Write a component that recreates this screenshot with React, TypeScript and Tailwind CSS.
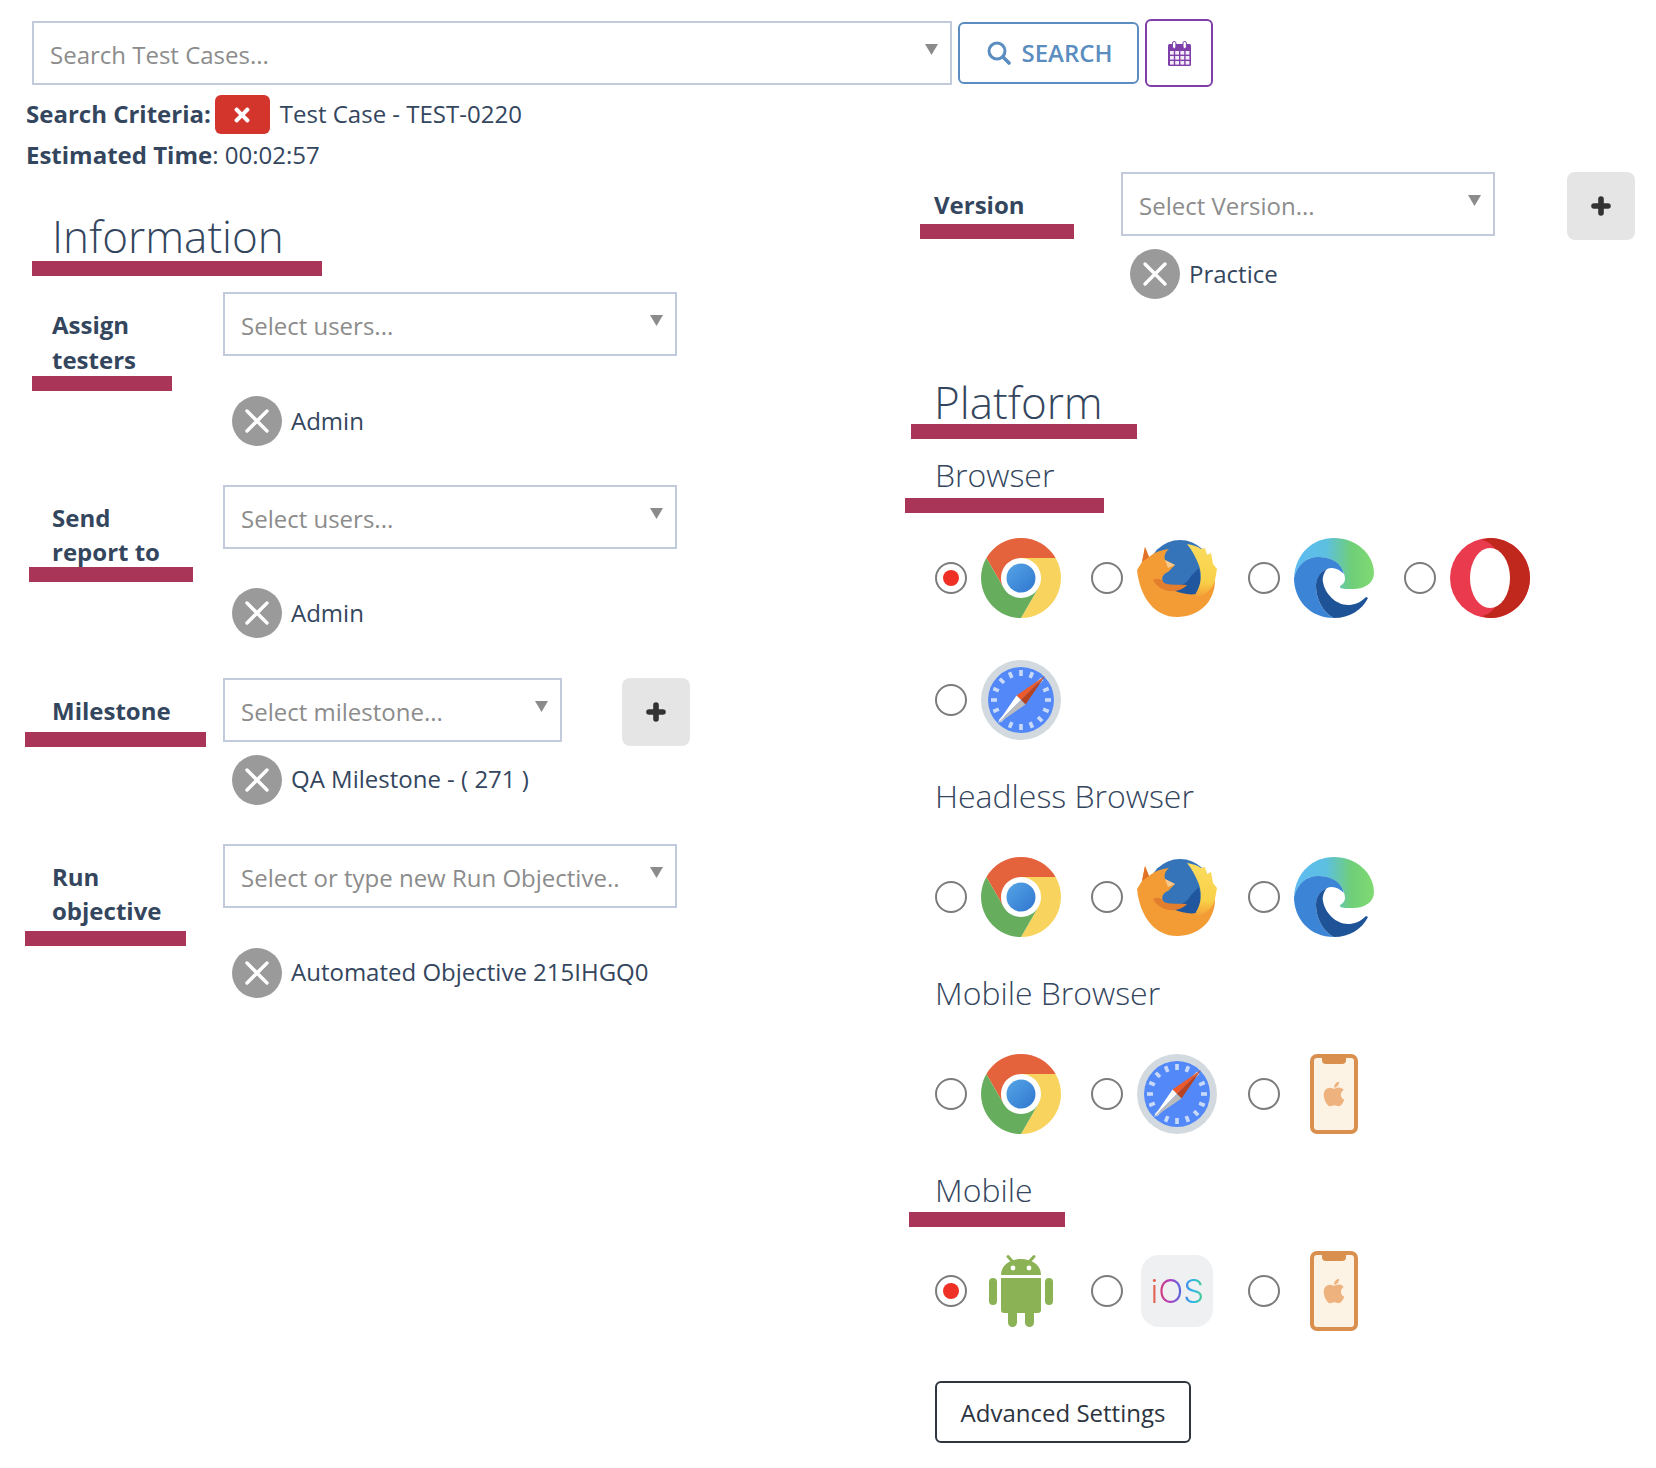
import { FaApple, FaTimes } from "react-icons/fa";

const Arrow = () => (
  <svg className="absolute top-[21px] right-[12px]" width="13" height="11" viewBox="0 0 13 11">
    <polygon points="0,0 13,0 6.5,11" fill="#8b8b8b" />
  </svg>
);

const Select = ({ text, cls }: { text: string; cls: string }) => (
  <div className={`relative h-[64px] shrink-0 border-2 border-[#c2cbdb] bg-white pl-[16px] pt-[4px] flex items-center text-[24px] text-[#8c8c8c] ${cls}`}>
    <span className="whitespace-nowrap">{text}</span>
    <Arrow />
  </div>
);

const Chip = ({ text, cls, lift = "pb-[1px]" }: { text: string; cls: string; lift?: string }) => (
  <div className={`flex items-center h-[50px] ${cls}`}>
    <div className="w-[50px] h-[50px] rounded-full bg-[#9a9a9a] flex items-center justify-center shrink-0">
      <svg width="26" height="26" viewBox="0 0 26 26">
        <path d="M3 3 L23 23 M23 3 L3 23" stroke="#fff" strokeWidth="3.4" strokeLinecap="round" />
      </svg>
    </div>
    <span className={`ml-[9px] text-[24px] whitespace-nowrap ${lift}`}>{text}</span>
  </div>
);

const PlusBtn = ({ cls }: { cls: string }) => (
  <div className={`w-[68px] h-[68px] shrink-0 rounded-[8px] bg-[#e5e5e5] flex items-center justify-center ${cls}`}>
    <svg width="20" height="20" viewBox="0 0 20 20">
      <path d="M10 3V17M3 10H17" stroke="#333" strokeWidth="5.6" strokeLinecap="round" />
    </svg>
  </div>
);

const Radio = ({ on = false }: { on?: boolean }) => (
  <div className="w-[32px] h-[32px] rounded-full border-2 border-[#7c7c7c] bg-white flex items-center justify-center shrink-0">
    {on && <div className="w-[16px] h-[16px] rounded-full bg-[#ee3124]" />}
  </div>
);

const Chrome = ({ id }: { id: string }) => (
  <svg width="80" height="80" viewBox="0 0 80 80">
    <defs>
      <linearGradient id={id} x1="0" y1="0" x2="1" y2="1">
        <stop offset="0" stopColor="#57a5e6" />
        <stop offset="1" stopColor="#2f76cf" />
      </linearGradient>
    </defs>
    <path d="M5.36 20 A40 40 0 0 1 74.64 20 H40 A20 20 0 0 0 22.68 50 Z" fill="#e4633c" />
    <path d="M74.64 20 A40 40 0 0 1 40 80 L57.32 50 A20 20 0 0 0 40 20 Z" fill="#f8d45e" />
    <path d="M40 80 A40 40 0 0 1 5.36 20 L22.68 50 A20 20 0 0 0 57.32 50 Z" fill="#66ad5e" />
    <circle cx="40" cy="40" r="18" fill="#fff" />
    <circle cx="40" cy="40" r="14.5" fill={`url(#${id})`} />
  </svg>
);

const Firefox = ({ id }: { id: string }) => (
  <svg width="80" height="80" viewBox="0 0 80 80">
    <defs>
      <linearGradient id={id} x1="0" y1="0" x2="0" y2="1">
        <stop offset="0" stopColor="#fbdc5e" />
        <stop offset="0.7" stopColor="#f9d048" />
        <stop offset="1" stopColor="#f39c36" />
      </linearGradient>
    </defs>
    <circle cx="43" cy="34" r="32" fill="#3674ba" />
    <path d="M34 46 C42 50 50 46 54 38 L62 30 L64 44 L58 58 L42 58 Z" fill="#20569e" />
    <path d="M0 32 L5 24 L8 9 L12 19 C18 14 24 12 32 11 C28 14 27 18 28 22 L38 27 L31 34 C26 36 24 40 26 44 C30 50 38 54 50 56 C56 57 60 56 62 54 L78 42 C78 64 62 79 40 79 C18 79 3 60 0 32 Z" fill="#f39c36" />
    <path d="M50 6 C55 7 60 8 64 11 L68 10 L70 17 L74 15 L76 26 L80 31 L78 42 C76 50 70 56 60 60 L59 55 C65 46 65 34 61 25 C58 18 55 12 50 6 Z" fill={`url(#${id})`} />
    <path d="M16 42 C20 40 24 40 26 44 C30 48 40 46 50 47 C46 52 36 55 28 52 C22 50 18 46 16 42 Z" fill="#e27e2e" />
    <path d="M28 22 L38 27 L31 30 Z" fill="#f7c98c" />
    <path d="M5 24 L8 9 L12 19 Z" fill="#e2722a" />
  </svg>
);

const Edge = ({ id }: { id: string }) => (
  <svg width="80" height="80" viewBox="0 0 80 80">
    <defs>
      <linearGradient id={id} x1="0" y1="0" x2="1" y2="0">
        <stop offset="0" stopColor="#5cbcf2" />
        <stop offset="0.4" stopColor="#5dbfe0" />
        <stop offset="0.72" stopColor="#6fcf78" />
        <stop offset="1" stopColor="#80da72" />
      </linearGradient>
    </defs>
    <path d="M0 39 C2 16 18 0 40 0 C62 0 80 16 80 35 C80 45 71 51 59 51 C52 51 46 51 46 49 C46 47 51 46 51 41 C51 31 42 19 23 19 C12 19 3 28 0 39 Z" fill={`url(#${id})`} />
    <path d="M0 40 C3 27 12 19 24 19 C36 19 47 24 50 36 C46 32 42 30 38 30 C30 30 22 38 22 48 C22 60 28 74 40 80 C16 80 0 62 0 40 Z" fill="#3b84d6" />
    <path d="M33 31 C26 34 22 40 22 48 C22 60 28 74 40 80 C56 80 68 72 74 60 L72 59 C66 65 60 67 54 67 C42 67 31 56 29 44 C28 40 30 34 33 31 Z" fill="#1f5398" />
  </svg>
);

const Opera = () => (
  <svg width="80" height="80" viewBox="0 0 80 80">
    <circle cx="40" cy="40" r="40" fill="#ea3a4d" />
    <path d="M40 0 C62 0 80 18 80 40 C80 62 62 80 40 80 C36 80 34 79 32 78 C44 76 54 60 54 40 C54 20 44 4 32 2 C34 1 36 0 40 0 Z" fill="#c1281d" />
    <ellipse cx="40" cy="40" rx="20" ry="30" fill="#fff" />
  </svg>
);

const Safari = () => (
  <svg width="80" height="80" viewBox="0 0 80 80">
    <circle cx="40" cy="40" r="40" fill="#d3dadf" />
    <circle cx="40" cy="40" r="33" fill="#5288f8" />
    {Array.from({ length: 16 }).map((_, i) => (
      <rect key={i} x="38.2" y="10" width="3.6" height="6" fill="#c9daf8" transform={`rotate(${i * 22.5} 40 40)`} />
    ))}
    <polygon points="64,16 35.5,35.5 40,40" fill="#ef5a2a" />
    <polygon points="64,16 40,40 44.5,44.5" fill="#b8431f" />
    <polygon points="16,64 35.5,35.5 40,40" fill="#fff" />
    <polygon points="16,64 40,40 44.5,44.5" fill="#bcbcbc" />
  </svg>
);

const Android = () => (
  <svg width="80" height="80" viewBox="-8 -4 80 80">
    <path d="M23 6 L19 1.5 M41 6 L45 1.5" stroke="#8bb356" strokeWidth="3" strokeLinecap="round" />
    <path d="M12 20 C12 10 21 4 32 4 C43 4 52 10 52 20 Z" fill="#8bb356" />
    <circle cx="24" cy="13" r="2.4" fill="#fff" />
    <circle cx="40" cy="13" r="2.4" fill="#fff" />
    <path d="M12 23 H52 V55 Q52 58 49 58 H15 Q12 58 12 55 Z" fill="#8bb356" />
    <rect x="0" y="23" width="8" height="27" rx="4" fill="#8bb356" />
    <rect x="56" y="23" width="8" height="27" rx="4" fill="#8bb356" />
    <rect x="19" y="50" width="9" height="22" rx="4.5" fill="#8bb356" />
    <rect x="36" y="50" width="9" height="22" rx="4.5" fill="#8bb356" />
  </svg>
);

const Ios = () => (
  <div className="w-[80px] h-[80px] flex items-center justify-center">
    <div className="w-[72px] h-[72px] rounded-[18px] bg-[#eef0f2] flex items-center justify-center">
      <span className="font-['Inter'] text-[33px] leading-none font-light bg-[linear-gradient(90deg,#e8903a_0%,#dd3f6a_12%,#b03cc0_36%,#4f6de0_58%,#2fb5e8_78%,#4fd08a_100%)] bg-clip-text text-transparent">iOS</span>
    </div>
  </div>
);

const Phone = () => (
  <div className="w-[80px] h-[80px] flex justify-center">
    <div className="relative w-[48px] h-[80px] rounded-[7px] border-[4px] border-[#d98f4e] bg-[#fdf3e4] flex items-center justify-center">
      <div className="absolute top-0 left-[8px] w-[24px] h-[6px] rounded-b-[4px] bg-[#d98f4e]" />
      <FaApple size={28} color="#eeb27e" />
    </div>
  </div>
);

const IconRow = ({ items, cls }: { items: [React.ReactNode, boolean][]; cls: string }) => (
  <div className={`flex flex-wrap ml-[30px] w-[640px] gap-x-[30.4px] gap-y-[42px] ${cls}`}>
    {items.map(([icon, on], i) => (
      <div key={i} className="flex items-center">
        <Radio on={on} />
        <div className="ml-[14px]">{icon}</div>
      </div>
    ))}
  </div>
);

const bar = "border-b-[15px] border-[#a93559]";

export default function App() {
  return (
    <div className="w-[1656px] h-[1468px] bg-white font-['Open_Sans',sans-serif] text-[#34465e] overflow-hidden">
      <header className="pt-[19px]">
        <div className="flex items-start pl-[32px]">
          <Select text="Search Test Cases..." cls="mt-[2px] w-[920px]" />
          <div className="mt-[3px] ml-[6px] w-[181px] h-[62px] rounded-[6px] border-2 border-[#5b8dc0] flex items-center justify-center gap-[10px] pl-[3px] text-[#5b8dc0] text-[24px] font-semibold">
            <svg width="24" height="24" viewBox="0 0 24 24" fill="none" stroke="#5b8dc0">
              <circle cx="10" cy="10" r="8" strokeWidth="3" />
              <path d="M16 16 L22 22" strokeWidth="3.6" strokeLinecap="round" />
            </svg>
            <span>SEARCH</span>
          </div>
          <div className="ml-[6px] w-[68px] h-[68px] rounded-[6px] border-2 border-[#7e3fa8] flex items-center justify-center">
            <svg width="23" height="25" viewBox="0 0 23 25">
              <rect x="0" y="3" width="23" height="22" rx="1.5" fill="#7e3fa8" />
              <rect x="4.5" y="0.5" width="3.4" height="7" rx="1.6" fill="#fff" stroke="#7e3fa8" />
              <rect x="15" y="0.5" width="3.4" height="7" rx="1.6" fill="#fff" stroke="#7e3fa8" />
              {[10, 15, 20].map((y) =>
                [2, 7.2, 12.4, 17.6].map((x) => (
                  <rect key={`${x}-${y}`} x={x} y={y} width="3.8" height="3.6" fill="#f3ecf8" />
                ))
              )}
            </svg>
          </div>
        </div>
        <div className="mt-[8px] pl-[26px] flex items-center h-[39px] text-[24px]">
          <span className="font-bold pb-[2px]">Search Criteria:</span>
          <div className="ml-[4px] w-[55px] h-[39px] rounded-[6px] bg-[#d3352c] flex items-center justify-center text-white">
            <FaTimes size={22} />
          </div>
          <span className="ml-[10px] pb-[2px]">Test Case - TEST-0220</span>
        </div>
        <div className="mt-[6px] pl-[26px] h-[30px] leading-[30px] text-[24px]">
          <span className="font-bold">Estimated Time</span>: 00:02:57
        </div>
      </header>

      <main className="mt-[2px] flex items-start">
        <section className="w-[905px] shrink-0">
          <div className={`mt-[43px] ml-[32px] w-[290px] pl-[20px] pb-[4px] text-[44px] leading-[42px] font-light ${bar}`}>Information</div>

          <div className="mt-[16px] grid grid-cols-[223px_1fr]">
            <div className={`mt-[15px] ml-[32px] w-[140px] h-[84px] pl-[20px] text-[24px] leading-[35px] font-bold ${bar}`}>Assign testers</div>
            <div>
              <Select text="Select users..." cls="w-[454px]" />
              <Chip text="Admin" cls="mt-[40px] ml-[9px]" />
            </div>
          </div>

          <div className="mt-[39px] grid grid-cols-[223px_1fr]">
            <div className={`mt-[16px] ml-[29px] w-[164px] h-[81px] pl-[23px] text-[24px] leading-[34px] font-bold ${bar}`}>Send<br />report to</div>
            <div>
              <Select text="Select users..." cls="w-[454px]" />
              <Chip text="Admin" cls="mt-[39px] ml-[9px]" />
            </div>
          </div>

          <div className="mt-[40px] grid grid-cols-[223px_1fr]">
            <div className={`mt-[16px] ml-[25px] w-[181px] h-[53px] pl-[27px] text-[24px] leading-[34px] font-bold ${bar}`}>Milestone</div>
            <div>
              <div className="flex items-start">
                <Select text="Select milestone..." cls="w-[339px]" />
                <PlusBtn cls="ml-[60px]" />
              </div>
              <Chip text="QA Milestone - ( 271 )" cls="mt-[9px] ml-[9px]" lift="pb-[2px]" />
            </div>
          </div>

          <div className="mt-[39px] grid grid-cols-[223px_1fr]">
            <div className={`mt-[16px] ml-[25px] w-[161px] h-[86px] pl-[27px] text-[24px] leading-[34px] font-bold ${bar}`}>Run objective</div>
            <div>
              <Select text="Select or type new Run Objective.." cls="w-[454px]" />
              <Chip text="Automated Objective 215IHGQ0" cls="mt-[40px] ml-[9px]" lift="pb-[2px]" />
            </div>
          </div>
        </section>

        <section className="flex-1">
          <div className="flex items-start">
            <div className={`ml-[15px] w-[154px] h-[67px] pt-[16px] pl-[14px] text-[24px] leading-[34px] font-bold ${bar}`}>Version</div>
            <Select text="Select Version..." cls="ml-[47px] w-[374px]" />
            <PlusBtn cls="ml-[72px]" />
          </div>
          <Chip text="Practice" cls="mt-[9px] ml-[225px]" />

          <div className={`mt-[82px] ml-[6px] w-[226px] pl-[23px] pb-[1px] text-[44px] leading-[42px] font-light ${bar}`}>Platform</div>

          <div className={`mt-[19px] w-[199px] pl-[30px] pb-[6px] text-[32px] leading-[34px] font-light ${bar}`}>Browser</div>
          <IconRow
            cls="mt-[25px]"
            items={[
              [<Chrome id="c1" />, true],
              [<Firefox id="f1" />, false],
              [<Edge id="e1" />, false],
              [<Opera />, false],
              [<Safari />, false],
            ]}
          />

          <div className="mt-[39px] pl-[30px] text-[32px] leading-[34px] font-light">Headless Browser</div>
          <IconRow
            cls="mt-[44px]"
            items={[
              [<Chrome id="c2" />, false],
              [<Firefox id="f2" />, false],
              [<Edge id="e2" />, false],
            ]}
          />

          <div className="mt-[39px] pl-[30px] text-[32px] leading-[34px] font-light">Mobile Browser</div>
          <IconRow
            cls="mt-[44px]"
            items={[
              [<Chrome id="c3" />, false],
              [<Safari />, false],
              [<Phone />, false],
            ]}
          />

          <div className={`mt-[39px] ml-[4px] w-[156px] pl-[26px] pb-[5px] text-[32px] leading-[34px] font-light ${bar}`}>Mobile</div>
          <IconRow
            cls="mt-[24px]"
            items={[
              [<Android />, true],
              [<Ios />, false],
              [<Phone />, false],
            ]}
          />

          <div className="mt-[50px] ml-[30px] w-[256px] h-[62px] pt-[2px] rounded-[6px] border-2 border-[#2f3640] flex items-center justify-center text-[24px] text-[#2b3440]">
            Advanced Settings
          </div>
        </section>
      </main>
    </div>
  );
}
